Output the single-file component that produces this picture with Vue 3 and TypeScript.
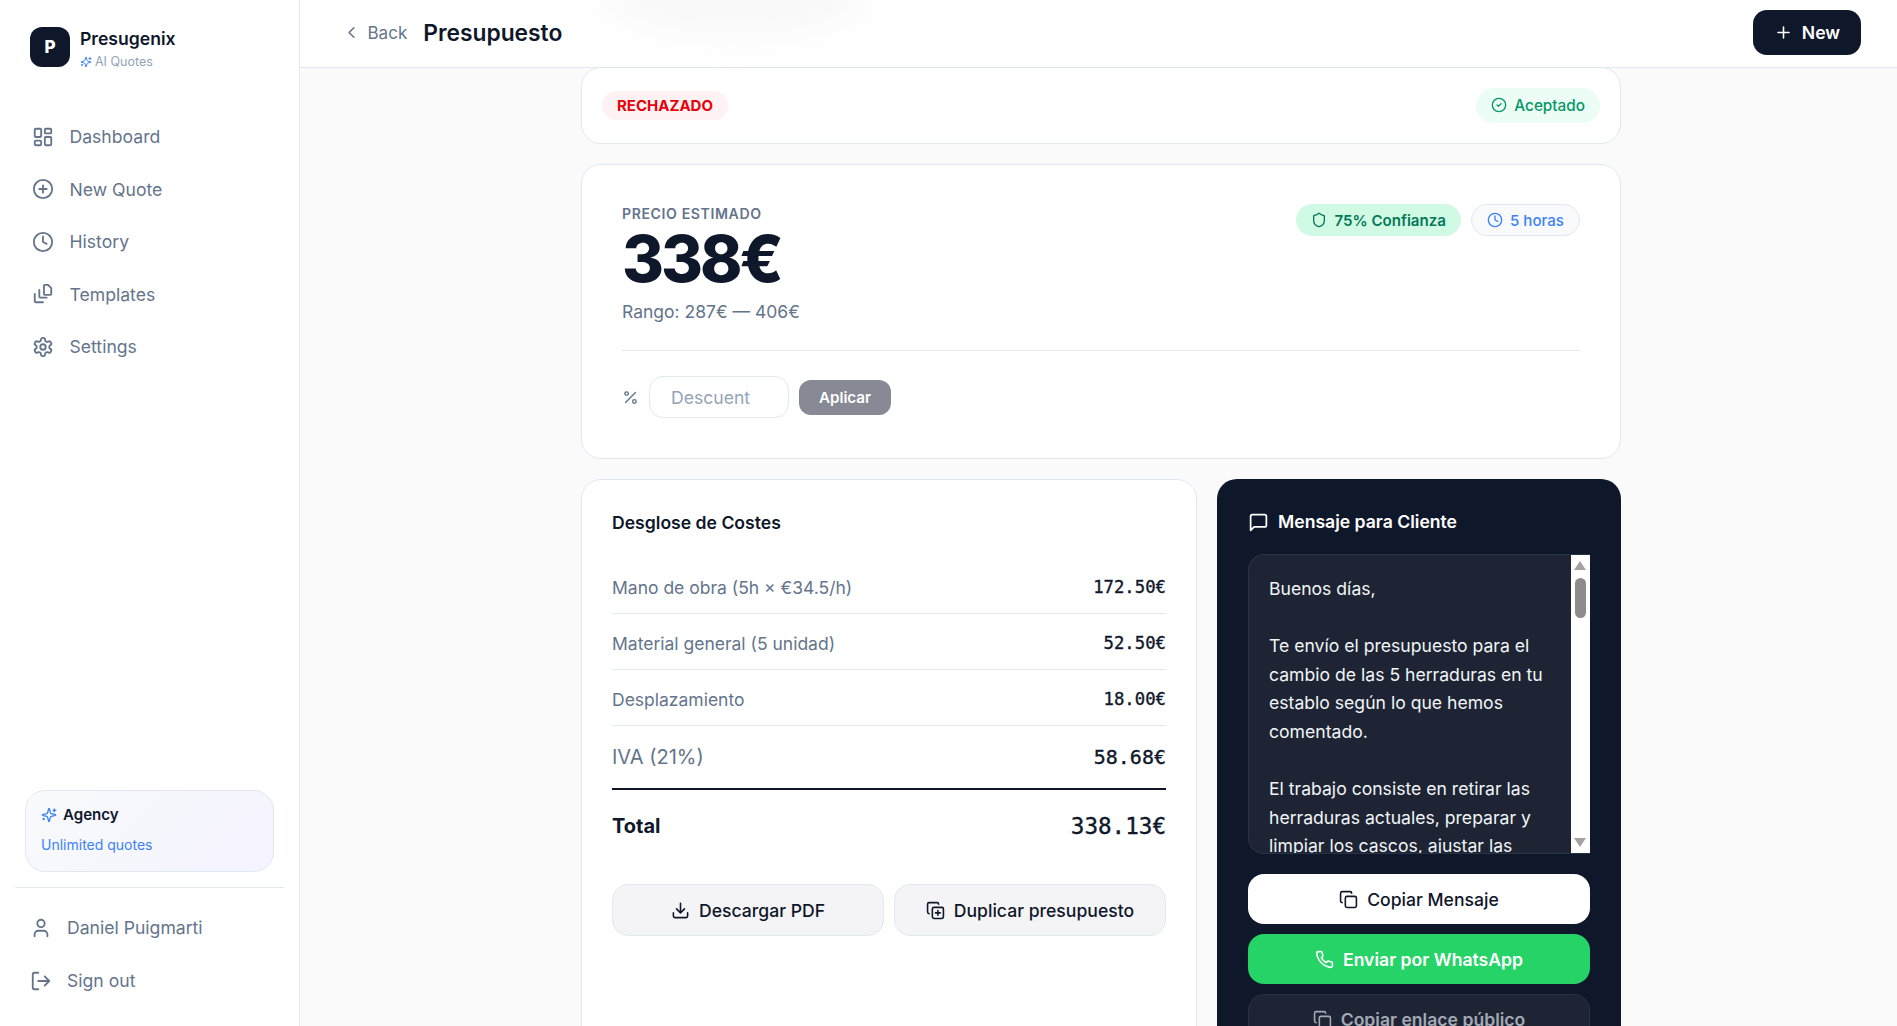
<script setup lang="ts">
const nav: { label: string; icon: string }[] = [
  { label: 'Dashboard', icon: 'dash' },
  { label: 'New Quote', icon: 'plus' },
  { label: 'History', icon: 'clock' },
  { label: 'Templates', icon: 'tpl' },
  { label: 'Settings', icon: 'gear' },
]
const rows = [
  { l: 'Mano de obra (5h × €34.5/h)', v: '172.50€' },
  { l: 'Material general (5 unidad)', v: '52.50€' },
  { l: 'Desplazamiento', v: '18.00€' },
]
const message = `Buenos días,

Te envío el presupuesto para el cambio de las 5 herraduras en tu establo según lo que hemos comentado.

El trabajo consiste en retirar las herraduras actuales, preparar y limpiar los cascos, ajustar las`
</script>

<template>
  <div class="app">
    <aside class="side">
      <div class="brand">
        <div class="logo">P</div>
        <div>
          <div class="bname">Presugenix</div>
          <div class="bsub">
            <svg class="spark" width="12" height="12" viewBox="0 0 24 24"><path d="M9.937 15.5A2 2 0 0 0 8.5 14.063l-6.135-1.582a.5.5 0 0 1 0-.962L8.5 9.936A2 2 0 0 0 9.937 8.5l1.582-6.135a.5.5 0 0 1 .963 0L14.063 8.5A2 2 0 0 0 15.5 9.937l6.135 1.581a.5.5 0 0 1 0 .964L15.5 14.063a2 2 0 0 0-1.437 1.437l-1.582 6.135a.5.5 0 0 1-.963 0z"/><path d="M20 3v4M22 5h-4M4 17v2M5 18H3"/></svg>
            AI Quotes
          </div>
        </div>
      </div>
      <nav class="nav">
        <div v-for="n in nav" :key="n.label" class="nitem">
          <svg class="ic" width="22" height="22" viewBox="0 0 24 24">
            <template v-if="n.icon === 'dash'"><rect x="3" y="3" width="7" height="9" rx="1"/><rect x="14" y="3" width="7" height="5" rx="1"/><rect x="14" y="12" width="7" height="9" rx="1"/><rect x="3" y="16" width="7" height="5" rx="1"/></template>
            <template v-else-if="n.icon === 'plus'"><circle cx="12" cy="12" r="10"/><path d="M8 12h8M12 8v8"/></template>
            <template v-else-if="n.icon === 'clock'"><circle cx="12" cy="12" r="10"/><path d="M12 6v6l4 2"/></template>
            <template v-else-if="n.icon === 'tpl'"><path d="M14 2h3.500L21 5.500V12a1 1 0 0 1-1 1h-6a1 1 0 0 1-1-1V3a1 1 0 0 1 1-1z"/><path d="M8 7.500V15a1 1 0 0 0 1 1h7"/><path d="M3 12v8a1 1 0 0 0 1 1h8"/></template>
            <template v-else><path d="M12.220 2h-.44a2 2 0 0 0-2 2v.18a2 2 0 0 1-1 1.730l-.43.25a2 2 0 0 1-2 0l-.15-.08a2 2 0 0 0-2.730.73l-.22.38a2 2 0 0 0 .73 2.730l.15.1a2 2 0 0 1 1 1.720v.51a2 2 0 0 1-1 1.740l-.15.09a2 2 0 0 0-.73 2.730l.22.38a2 2 0 0 0 2.730.73l.15-.08a2 2 0 0 1 2 0l.43.25a2 2 0 0 1 1 1.730V20a2 2 0 0 0 2 2h.44a2 2 0 0 0 2-2v-.18a2 2 0 0 1 1-1.730l.43-.25a2 2 0 0 1 2 0l.15.08a2 2 0 0 0 2.730-.73l.22-.39a2 2 0 0 0-.73-2.730l-.15-.08a2 2 0 0 1-1-1.740v-.5a2 2 0 0 1 1-1.740l.15-.09a2 2 0 0 0 .73-2.730l-.22-.38a2 2 0 0 0-2.730-.73l-.15.08a2 2 0 0 1-2 0l-.43-.25a2 2 0 0 1-1-1.730V4a2 2 0 0 0-2-2z"/><circle cx="12" cy="12" r="3"/></template>
          </svg>
          <span>{{ n.label }}</span>
        </div>
      </nav>
      <div class="plan">
        <div class="ptitle">
          <svg class="pspark" width="16" height="16" viewBox="0 0 24 24"><path d="M9.937 15.5A2 2 0 0 0 8.5 14.063l-6.135-1.582a.5.5 0 0 1 0-.962L8.5 9.936A2 2 0 0 0 9.937 8.5l1.582-6.135a.5.5 0 0 1 .963 0L14.063 8.5A2 2 0 0 0 15.5 9.937l6.135 1.581a.5.5 0 0 1 0 .964L15.5 14.063a2 2 0 0 0-1.437 1.437l-1.582 6.135a.5.5 0 0 1-.963 0z"/><path d="M20 3v4M22 5h-4M4 17v2M5 18H3"/></svg>
          Agency
        </div>
        <div class="psub">Unlimited quotes</div>
      </div>
      <div class="sfoot">
        <div class="fitem">
          <svg class="ic" width="22" height="22" viewBox="0 0 24 24"><path d="M19 21v-2a4 4 0 0 0-4-4H9a4 4 0 0 0-4 4v2"/><circle cx="12" cy="7" r="4"/></svg>
          <span>Daniel Puigmarti</span>
        </div>
        <div class="fitem">
          <svg class="ic" width="22" height="22" viewBox="0 0 24 24"><path d="M9 21H5a2 2 0 0 1-2-2V5a2 2 0 0 1 2-2h4"/><path d="M16 17l5-5-5-5M21 12H9"/></svg>
          <span>Sign out</span>
        </div>
      </div>
    </aside>

    <main class="main">
      <header class="head">
        <div class="ghost"></div>
        <div class="hleft">
          <div class="back">
            <svg class="ic" width="19" height="19" viewBox="0 0 24 24"><path d="M15 18l-6-6 6-6"/></svg>
            <span>Back</span>
          </div>
          <h1 class="title">Presupuesto</h1>
        </div>
        <button class="newbtn">
          <svg class="ic" width="19" height="19" viewBox="0 0 24 24"><path d="M5 12h14M12 5v14"/></svg>
          New
        </button>
      </header>

      <div class="content">
        <section class="card status">
          <span class="rej">RECHAZADO</span>
          <span class="acc">
            <svg class="ic" width="16" height="16" viewBox="0 0 24 24"><circle cx="12" cy="12" r="10"/><path d="M9 12l2 2 4-4"/></svg>
            Aceptado
          </span>
        </section>

        <section class="card price">
          <div class="ptop">
            <div>
              <div class="plabel">PRECIO ESTIMADO</div>
              <div class="pval">338€</div>
              <div class="prange">Rango: 287€ — 406€</div>
            </div>
            <div class="badges">
              <span class="conf">
                <svg class="ic" width="16" height="16" viewBox="0 0 24 24"><path d="M20 13c0 5-3.500 7.500-7.660 8.950a1 1 0 0 1-.67-.01C7.500 20.500 4 18 4 13V6a1 1 0 0 1 1-1c2 0 4.500-1.200 6.240-2.720a1.170 1.170 0 0 1 1.520 0C14.510 3.810 17 5 19 5a1 1 0 0 1 1 1z"/></svg>
                75% Confianza
              </span>
              <span class="hours">
                <svg class="ic" width="16" height="16" viewBox="0 0 24 24"><circle cx="12" cy="12" r="10"/><path d="M12 6v6l4 2"/></svg>
                5 horas
              </span>
            </div>
          </div>
          <div class="disc">
            <svg class="ic" width="17" height="17" viewBox="0 0 24 24"><path d="M19 5L5 19"/><circle cx="6.500" cy="6.500" r="2.500"/><circle cx="17.500" cy="17.500" r="2.500"/></svg>
            <div class="dinput">Descuent</div>
            <button class="apply">Aplicar</button>
          </div>
        </section>

        <div class="cols">
          <section class="card costs">
            <h2 class="ctitle">Desglose de Costes</h2>
            <div v-for="r in rows" :key="r.l" class="row">
              <span>{{ r.l }}</span>
              <span class="mono">{{ r.v }}</span>
            </div>
            <div class="row iva">
              <span>IVA (21%)</span>
              <span class="mono">58.68€</span>
            </div>
            <div class="row total">
              <span>Total</span>
              <span class="mono">338.13€</span>
            </div>
            <div class="acts">
              <button class="act">
                <svg class="ic" width="19" height="19" viewBox="0 0 24 24"><path d="M21 15v4a2 2 0 0 1-2 2H5a2 2 0 0 1-2-2v-4"/><path d="M7 10l5 5 5-5M12 15V3"/></svg>
                Descargar PDF
              </button>
              <button class="act">
                <svg class="ic" width="19" height="19" viewBox="0 0 24 24"><path d="M15 12v6M12 15h6"/><rect x="8" y="8" width="14" height="14" rx="2"/><path d="M4 16c-1.100 0-2-.9-2-2V4c0-1.100.9-2 2-2h10c1.100 0 2 .9 2 2"/></svg>
                Duplicar presupuesto
              </button>
            </div>
          </section>

          <section class="msg">
            <h2 class="mtitle">
              <svg class="ic" width="21" height="21" viewBox="0 0 24 24"><path d="M21 15a2 2 0 0 1-2 2H7l-4 4V5a2 2 0 0 1 2-2h14a2 2 0 0 1 2 2z"/></svg>
              Mensaje para Cliente
            </h2>
            <div class="mbox">
              <div class="mtext">{{ message }}</div>
              <div class="sbar">
                <span class="arr up"></span>
                <span class="thumb"></span>
                <span class="arr down"></span>
              </div>
            </div>
            <button class="mbtn white">
              <svg class="ic" width="19" height="19" viewBox="0 0 24 24"><rect x="8" y="8" width="14" height="14" rx="2"/><path d="M4 16c-1.100 0-2-.9-2-2V4c0-1.100.9-2 2-2h10c1.100 0 2 .9 2 2"/></svg>
              Copiar Mensaje
            </button>
            <button class="mbtn green">
              <svg class="ic" width="19" height="19" viewBox="0 0 24 24"><path d="M22 16.920v3a2 2 0 0 1-2.180 2 19.790 19.790 0 0 1-8.630-3.070 19.500 19.500 0 0 1-6-6 19.790 19.790 0 0 1-3.070-8.670A2 2 0 0 1 4.110 2h3a2 2 0 0 1 2 1.720 12.840 12.840 0 0 0 .7 2.810 2 2 0 0 1-.45 2.110L8.090 9.910a16 16 0 0 0 6 6l1.270-1.270a2 2 0 0 1 2.110-.45 12.840 12.840 0 0 0 2.810.7A2 2 0 0 1 22 16.920z"/></svg>
              Enviar por WhatsApp
            </button>
            <button class="mbtn dark">
              <svg class="ic" width="19" height="19" viewBox="0 0 24 24"><rect x="8" y="8" width="14" height="14" rx="2"/><path d="M4 16c-1.100 0-2-.9-2-2V4c0-1.100.9-2 2-2h10c1.100 0 2 .9 2 2"/></svg>
              Copiar enlace público
            </button>
          </section>
        </div>
      </div>
    </main>
  </div>
</template>

<style>
html, body { margin: 0; height: 100%; overflow: hidden; background: #fafafa; }
</style>

<style scoped>
.app { display: flex; height: 1026px; overflow: hidden; font-family: Inter, "Liberation Sans", sans-serif; color: #0f172a; }
.ic { fill: none; stroke: currentColor; stroke-width: 2; stroke-linecap: round; stroke-linejoin: round; flex: none; }
.spark, .pspark { fill: none; stroke: #3b82f6; stroke-width: 2; stroke-linecap: round; stroke-linejoin: round; flex: none; }
button { font-family: inherit; border: 0; cursor: pointer; }

.side { width: 299px; flex: none; background: #fff; border-right: 1px solid #e2e8f0; display: flex; flex-direction: column; box-sizing: content-box; }
.brand { display: flex; gap: 10px; padding: 27px 30px 0; align-items: flex-start; }
.logo { width: 40px; height: 40px; border-radius: 12px; background: #0f172a; color: #fff; font-weight: 800; font-size: 17px; display: flex; align-items: center; justify-content: center; }
.bname { font-size: 17.6px; font-weight: 600; line-height: 24px; color: #0f172a; }
.bsub { font-size: 12.500px; line-height: 16px; color: #94a3b8; display: flex; align-items: center; gap: 3px; margin-top: 3px; }
.nav { display: flex; flex-direction: column; margin-top: 40.500px; padding-left: 32px; flex: 1; }
.nitem { height: 52.500px; display: flex; align-items: center; gap: 15.500px; font-size: 17.6px; color: #64748b; }
.plan { margin: 0 25px; height: 82px; box-sizing: border-box; border: 1px solid #e2e8f0; border-radius: 20px; background: linear-gradient(135deg, #f8fafc, #f5f3ff); padding: 13px 15px; }
.ptitle { display: flex; align-items: center; gap: 6px; font-size: 15.100px; font-weight: 600; line-height: 22px; color: #0f172a; }
.psub { font-size: 14px; color: #3b82f6; line-height: 20px; margin-top: 9px; }
.sfoot { margin: 15px 15px 0; border-top: 1px solid #e2e8f0; padding: 13px 0 19px 15px; }
.fitem { height: 53px; display: flex; align-items: center; gap: 15px; font-size: 17.6px; color: #64748b; }

.main { flex: 1; min-width: 0; position: relative; display: flex; flex-direction: column; height: 1026px; overflow: hidden; background: #fafafa; }
.head { height: 67px; flex: none; box-sizing: content-box; background: #fff; border-bottom: 1px solid #e2e8f0; display: flex; align-items: center; justify-content: space-between; padding: 0 36px 0 41.500px; position: relative; z-index: 2; overflow: hidden; }
.ghost { position: absolute; left: 300px; top: -50px; width: 270px; height: 90px; border-radius: 50%; background: #f9f9fa; filter: blur(16px); }
.hleft { display: flex; align-items: center; gap: 16px; position: relative; margin-bottom: 2px; }
.back { display: flex; align-items: center; gap: 7px; font-size: 17px; color: #64748b; }
.title { margin: 0; font-size: 22.800px; font-weight: 600; color: #0f172a; }
.newbtn { height: 45px; width: 108px; background: #0f172a; color: #fff; border-radius: 14px; font-size: 17.6px; font-weight: 600; display: flex; align-items: center; justify-content: center; gap: 9px; position: relative; margin-bottom: 2px; }

.content { width: 1040px; margin: -1px 0 0 281px; display: flex; flex-direction: column; gap: 20px; flex: none; }
.card { background: #fff; border: 1px solid #e2e8f0; border-radius: 20px; box-sizing: border-box; }
.status { height: 77px; display: flex; align-items: center; justify-content: space-between; padding: 0 20px 1px; }
.rej { height: 29px; padding: 0 15px; border-radius: 15px; background: #fef2f2; color: #e7000b; font-size: 15px; font-weight: 700; display: flex; align-items: center; }
.acc { height: 35px; padding: 0 15px; border-radius: 18px; background: #ecfdf5; color: #059669; font-size: 15.300px; font-weight: 500; display: flex; align-items: center; gap: 7px; }

.price { height: 295px; padding: 40px; }
.ptop { display: flex; justify-content: space-between; align-items: flex-start; border-bottom: 1px solid #e2e8f0; height: 145px; }
.plabel { font-size: 14.100px; font-weight: 600; letter-spacing: 0.6px; color: #64748b; line-height: 20px; margin-top: -1px; }
.pval { font-size: 64px; font-weight: 800; line-height: 66px; letter-spacing: -3px; color: #0f172a; margin-top: 2px; }
.prange { font-size: 17.500px; color: #64748b; line-height: 24px; margin-top: 8px; }
.badges { display: flex; gap: 10px; margin-top: -1px; }
.conf, .hours { height: 32px; box-sizing: border-box; border-radius: 16px; padding: 0 15px; display: flex; align-items: center; gap: 7px; font-size: 15.100px; font-weight: 600; }
.conf { background: #d1fae5; color: #047857; }
.hours { background: #f8fafc; border: 1px solid #e2e8f0; color: #3b82f6; font-weight: 500; }
.disc { display: flex; align-items: center; margin-top: 25px; color: #64748b; }
.disc .ic { margin: 0 10px 0 0; }
.dinput { width: 140px; height: 42px; box-sizing: border-box; border: 1px solid #e2e8f0; border-radius: 14px; padding: 0 21px; font-size: 17.6px; color: #94a3b8; display: flex; align-items: center; background: #fff; }
.apply { width: 92px; height: 35px; margin-left: 10px; border-radius: 12px; background: #878a94; color: #fff; font-size: 15.200px; font-weight: 600; }

.cols { display: grid; grid-template-columns: 616px 404px; gap: 20px; align-items: start; }
.costs { padding: 31px 30px; min-height: 620px; }
.ctitle { margin: 0 0 23px; font-size: 17.6px; font-weight: 600; line-height: 24px; color: #0f172a; }
.row { display: flex; justify-content: space-between; align-items: center; height: 56px; box-sizing: border-box; padding-top: 3px; border-bottom: 1px solid #e2e8f0; color: #64748b; font-size: 17.500px; }
.mono { font-family: "DejaVu Sans Mono", "Liberation Mono", monospace; font-weight: 400; -webkit-text-stroke: 0.35px currentColor; font-size: 17.300px; color: #0f172a; }
.iva { font-size: 20px; height: 64px; padding-top: 0; border-bottom: 2px solid #0f172a; }
.iva .mono { font-size: 20px; }
.total { height: 72px; padding-top: 0; border: 0; color: #0f172a; font-size: 20px; font-weight: 700; }
.total .mono { font-size: 22.600px; }
.acts { display: grid; grid-template-columns: 1fr 1fr; gap: 10px; margin-top: 22px; }
.act { height: 52px; border: 1px solid #e2e8f0; border-radius: 16px; background: #f4f4f6; color: #0f172a; font-size: 17.6px; font-weight: 500; display: flex; align-items: center; justify-content: center; gap: 9px; }

.msg { background: #0f172a; border-radius: 20px; padding: 31px 31px; min-height: 620px; box-sizing: border-box; display: flex; flex-direction: column; gap: 10px; }
.mtitle { margin: 0 0 10px; display: flex; align-items: center; gap: 9px; font-size: 17.6px; font-weight: 600; color: #fff; line-height: 24px; }
.mbox { display: flex; height: 300px; box-sizing: border-box; flex: none; border: 1px solid #2a3344; border-right: 0; border-radius: 16px 0 0 16px; overflow: hidden; background: #1e2433; margin-bottom: 10px; }
.mtext { flex: 1; min-width: 0; padding: 20px 20px 0; font-size: 17.6px; line-height: 28.600px; color: #f1f5f9; white-space: pre-wrap; overflow: hidden; }
.sbar { width: 19px; flex: none; background: #fff; position: relative; }
.arr { position: absolute; left: 3px; width: 0; height: 0; border-left: 6.500px solid transparent; border-right: 6.500px solid transparent; }
.arr.up { top: 6px; border-bottom: 9px solid #a3a3a3; }
.arr.down { bottom: 6px; border-top: 9px solid #a3a3a3; }
.thumb { position: absolute; left: 4px; width: 11px; top: 23px; height: 40px; border-radius: 6px; background: #8c8c8c; }
.mbtn { height: 50px; border-radius: 16px; font-size: 17.6px; display: flex; align-items: center; justify-content: center; gap: 9px; flex: none; }
.white { background: #fff; color: #0f172a; font-weight: 500; }
.green { background: #25d366; color: #fff; font-weight: 600; }
.dark { background: #1e2433; border: 1px solid #283242; color: #a3a9b5; font-weight: 600; }
</style>
